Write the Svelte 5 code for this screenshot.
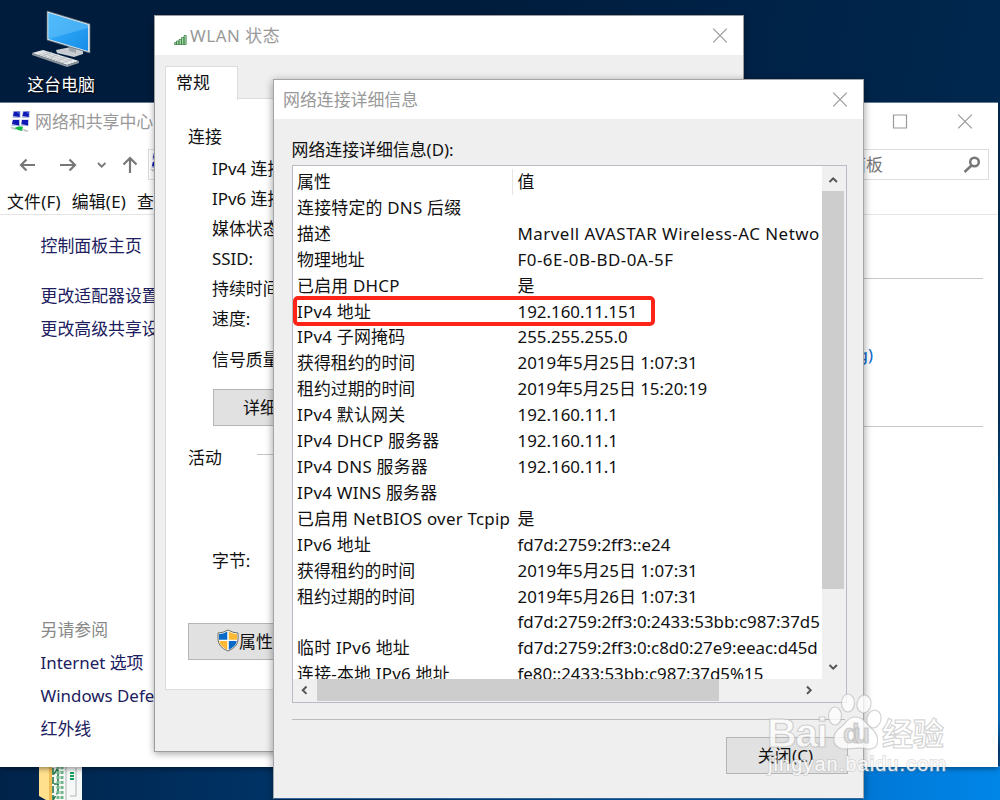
<script lang="ts">
    const rows = [
        ['属性', '值'],
        ['连接特定的 DNS 后缀', ''],
        ['描述', 'Marvell AVASTAR Wireless-AC Netwo'],
        ['物理地址', 'F0-6E-0B-BD-0A-5F'],
        ['已启用 DHCP', '是'],
        ['IPv4 地址', '192.160.11.151'],
        ['IPv4 子网掩码', '255.255.255.0'],
        ['获得租约的时间', '2019年5月25日 1:07:31'],
        ['租约过期的时间', '2019年5月25日 15:20:19'],
        ['IPv4 默认网关', '192.160.11.1'],
        ['IPv4 DHCP 服务器', '192.160.11.1'],
        ['IPv4 DNS 服务器', '192.160.11.1'],
        ['IPv4 WINS 服务器', ''],
        ['已启用 NetBIOS over Tcpip', '是'],
        ['IPv6 地址', 'fd7d:2759:2ff3::e24'],
        ['获得租约的时间', '2019年5月25日 1:07:31'],
        ['租约过期的时间', '2019年5月26日 1:07:31'],
        ['', 'fd7d:2759:2ff3:0:2433:53bb:c987:37d5'],
        ['临时 IPv6 地址', 'fd7d:2759:2ff3:0:c8d0:27e9:eeac:d45d'],
        ['连接-本地 IPv6 地址', 'fe80::2433:53bb:c987:37d5%15']
    ];
    const status = ['IPv4 连接:', 'IPv6 连接:', '媒体状态:', 'SSID:', '持续时间:', '速度:'];
    const tasks = ['更改适配器设置', '更改高级共享设'];
    const related = ['Internet 选项', 'Windows Defe', '红外线'];
</script>

{#snippet closeIcon()}
    <svg class="close" width="16" height="16" viewBox="0 0 16 16"><path d="M1.2 .7 14.8 14.3M14.8 .7 1.2 14.3" /></svg>
{/snippet}

{#snippet networkIcon()}
    <svg class="net-icon" width="22" height="22" viewBox="0 0 22 22">
        <path d="M0 15.500 6 17v2L2 18zM14 18l5 2-3 1-4-2z" fill="#c3c8cc" />
        <path d="M4.500 17q5-3 8.500-1l-1 4q-4 0-7.500-3z" fill="#19b845" />
        <path d="M3 0h7.500v7H2.500zM12.500 0H20l-.5 7h-7.500zM2.500 8.500H10v6.500H1.500zM11.500 8.500H19L18.500 15H11z" fill="#b4bfe0" />
        <path d="M4 .7h5.700V6L3 5zM13.500.7h5.300V6L12.500 5zM3 9h6v5.500L2 13zM12 9h6v5.500L11.500 13z" fill="#1017b4" />
        <path d="M6.500.7h3.200v3zM16 .7h2.800v3z" fill="#3c59dd" />
    </svg>
{/snippet}

<main class="desktop">
    <div class="computer">
        <svg width="60" height="58" viewBox="0 0 60 58">
            <defs>
                <linearGradient id="screen" x1="0" y1="0" x2="1" y2="1">
                    <stop offset="0" stop-color="#39b4fb" />
                    <stop offset="1" stop-color="#168de9" />
                </linearGradient>
            </defs>
            <path d="M24 40l15-3 12 4v3l-9 3-17-4z" fill="#c8cdd1" />
            <path d="M37 35h7v8l-7-2z" fill="#9ca5ac" />
            <path d="M15 1 58 14v29L15 30z" fill="#d9e2e8" stroke="#5c6974" stroke-width=".7" />
            <path d="M16.500 3 56 15v26L16.500 29z" fill="url(#screen)" />
            <path d="M16.500 3 56 15v3L16.500 29z" fill="#69c4fc" opacity=".5" />
            <path d="M0 43 11 40l36 11-12 4z" fill="#e3e6e7" />
            <path d="M0 43 35 55l12-4v2l-12 4L0 45z" fill="#8c959d" />
            <path d="M7 44l25 9M10 43l26 9M13 42l27 9M11 46l9-4M18 48l9-4M25 51l9-4M31 53l9-4" stroke="#b0b6ba" stroke-width=".7" />
        </svg>
        <span>这台电脑</span>
    </div>

    <svg class="folder" width="44" height="38" viewBox="0 0 44 38">
        <path d="M1 0h14v38L1 30z" fill="#ffe08d" />
        <path d="M11 0h3v38h-3z" fill="#f0bd55" />
        <path d="M14 0h30v38H14z" fill="#f6f8f7" />
        <path d="M15 2v32M16 8l4-6v24l-5 8M16 18h5" stroke="#267848" stroke-width="1.600" fill="none" stroke-dasharray="7 2" />
        <path d="M20 0v36M24 0v38" stroke="#70b68a" stroke-width="3" stroke-dasharray="3 2" />
        <path d="M28 0v38M38 2v28h-6" stroke="#b0b5b8" fill="none" />
        <path d="M34 6v8" stroke="#18a262" stroke-width="4" stroke-dasharray="2 1" />
    </svg>

    <section class="window network">
        <header>
            {@render networkIcon()}
            <h1>网络和共享中心</h1>
            <svg class="maximize" width="16" height="16" viewBox="0 0 16 16"><path d="M1.500 1h13v13h-13z" /></svg>
            {@render closeIcon()}
        </header>
        <nav>
            <svg class="arrows" width="144" height="24" viewBox="0 0 144 24">
                <path d="M35 12H21M26.500 6.500 21 12l5.500 5.500M60 12h14M69.500 6.500 75 12l-5.500 5.500M130 20V6M123.500 11.500 130 5l6.500 6.500" />
                <path class="small" d="m98 10 3.700 3.700L105.400 10" />
            </svg>
            <div class="address">{@render networkIcon()}</div>
            <div class="search">
                <span>面板</span>
                <svg width="18" height="18" viewBox="0 0 18 18"><circle cx="11.500" cy="6" r="4.300" /><path d="M8.500 9.500 1.500 16" /></svg>
            </div>
        </nav>
        <div class="menubar"><span>文件(F)</span><span>编辑(E)</span><span>查</span></div>
        <div class="body">
            <aside>
                <a class="home">控制面板主页</a>
                {#each tasks as task}
                    <a>{task}</a>
                {/each}
                <p>另请参阅</p>
                {#each related as item}
                    <a>{item}</a>
                {/each}
            </aside>
            <div class="content">
                <div class="connection"><a>g)</a></div>
            </div>
        </div>
    </section>

    <section class="window wlan">
        <header>
            <svg class="signal" width="13" height="10" viewBox="0 0 13 10">
                <path d="M.5 9.500v-2h2v2zM2.500 9.500V6h2.500v3.500zM5 9.500V4.500h2.500v5zM7.500 9.500v-7H10v7zM10 9.500v-9h2.200v9z" />
            </svg>
            <h1>WLAN 状态</h1>
            {@render closeIcon()}
        </header>
        <div class="tabs"><span>常规</span></div>
        <div class="pane">
            <h2>连接</h2>
            <div class="status">
                {#each status as label}
                    <span>{label}</span>
                {/each}
                <span class="quality">信号质量:</span>
            </div>
            <button class="details-button">详细</button>
            <div class="activity"><h2>活动</h2><i></i></div>
            <span class="bytes">字节:</span>
            <button class="properties">
                <svg width="22" height="23" viewBox="0 0 22 23">
                    <path d="M11 1Q6 4 1 4v6q0 8 10 12 10-4 10-12V4Q16 4 11 1z" fill="#fff" stroke="#6b6b62" />
                    <path d="M10.300 2.500v8.200H2V5q4 0 8.300-2.500zM11.800 12h8q-1 5.500-8 8.700z" fill="#0869c6" />
                    <path d="M11.800 2.500Q16 5 20 5v5.700h-8.200zM2.200 12h8.100v8.700Q3.200 17.500 2.200 12z" fill="#fdb934" />
                </svg>属性
            </button>
        </div>
    </section>

    <section class="window details">
        <header>
            <h1>网络连接详细信息</h1>
            {@render closeIcon()}
        </header>
        <p class="caption">网络连接详细信息(D):</p>
        <div class="listbox">
            <div class="list">
                {#each rows as [name, value], i}
                    <div class="row" class:heading={i === 0} class:adapter={i === 2 || i === 3}>
                        <span class="name" class:latin-name={/[A-Z]/.test(name)}>{name}</span>
                        <span class="value">{value}</span>
                    </div>
                {/each}
            </div>
            <div class="vscroll">
                <svg width="22" height="23" viewBox="0 0 22 23"><path d="m7.500 14 3.700-3.700 3.700 3.700" /></svg>
                <div class="thumb"></div>
                <svg width="22" height="23" viewBox="0 0 22 23"><path d="m7.500 9 3.700 3.700 3.700-3.700" /></svg>
            </div>
            <div class="hscroll">
                <svg width="23" height="22" viewBox="0 0 23 22"><path d="M13.500 7.500 9.800 11.200l3.700 3.700" /></svg>
                <div class="thumb"></div>
                <svg width="23" height="22" viewBox="0 0 23 22"><path d="m9 7.500 3.700 3.700L9 14.900" /></svg>
            </div>
        </div>
        <div class="highlight"></div>
        <footer><button>关闭(C)</button></footer>
    </section>

    <svg class="watermark" width="190" height="96" viewBox="0 0 190 96">
        <g class="mark">
            <ellipse cx="74" cy="31" rx="6.500" ry="9" />
            <ellipse cx="87" cy="18" rx="6.500" ry="9" />
            <ellipse cx="103" cy="19" rx="7" ry="9" transform="rotate(8 103 19)" />
            <ellipse cx="113" cy="34" rx="7" ry="9" transform="rotate(15 113 34)" />
            <path d="M94 32c-8 0-9 7-14 10-10 7-10 20 2 22 8 0 16-2 25 0 12 1 12-13 4-20-6-5-8-12-17-12z" />
            <text class="latin" x="6" y="62" textLength="61">Bai</text>
            <text class="latin du" x="82" y="58" textLength="27">du</text>
            <text class="cjk" x="121" y="60" textLength="62">经验</text>
            <text class="url" x="7" y="86" textLength="178">jingyan.baidu.com</text>
        </g>
    </svg>
</main>

<style>
    :global(body) {
        margin: 0;
        overflow: hidden;
    }

    .desktop {
        position: relative;
        width: 1000px;
        height: 800px;
        overflow: hidden;
        font: 16.9px/26px "Noto Sans", "Noto Sans CJK SC", sans-serif;
        color: #111;
        background:
            linear-gradient(90deg, #00234a 0, #003366 27%, #0067bd 65%, #0078d7 87%, #0086e8) 0 766px / 1000px 34px no-repeat,
            linear-gradient(#012b53 0, #003567 320px, #0068a8 420px, #0088d0 520px, #0078d0 620px, #034077 650px, #0078d7 720px) 996px 100px / 4px 700px no-repeat,
            linear-gradient(100deg, #001c3d 0, #001c3c 40%, #002348 70%, #002a52);
    }

    h1, h2, p {
        margin: 0;
        font-size: inherit;
        font-weight: 400;
    }

    svg {
        display: block;
        flex: none;
    }

    button {
        box-sizing: border-box;
        padding: 0;
        border: 1px solid #b5b5b5;
        background: #e1e1e1;
        color: inherit;
        font: inherit;
    }

    .computer {
        position: absolute;
        top: 10px;
        left: 22px;
        width: 78px;
        display: flex;
        flex-direction: column;
        align-items: center;
        gap: 4px;
        color: #fff;
        text-shadow: 1px 1px 2px #000;
    }

    .computer svg {
        margin-left: 1px;
    }

    .folder {
        position: absolute;
        top: 766px;
        left: 38px;
    }

    .window {
        position: absolute;
        box-sizing: border-box;
        background: #efefef;
    }

    .window header {
        display: flex;
        align-items: center;
        background: #fff;
    }

    h1 {
        flex: 1;
        color: #999;
        white-space: nowrap;
    }

    .close, .maximize {
        fill: none;
        stroke: #999;
        stroke-width: 1.2;
    }

    /* network and sharing center */
    .network {
        top: 102px;
        left: 0;
        width: 998px;
        height: 665px;
        border-top: 1px solid #617b96;
        background: #fff;
        box-shadow: 0 2px 5px #0006;
    }

    .network header {
        height: 38px;
        padding: 0 25px 0 10px;
    }

    .network h1 {
        margin-left: 3px;
    }

    .net-icon {
        margin-top: -1px;
    }

    .maximize {
        margin-right: 49px;
    }

    nav {
        display: flex;
        align-items: center;
        height: 47px;
        padding: 0 9px 2px 0;
    }

    .arrows {
        margin: 1px 4px 0 0;
        fill: none;
        stroke: #777;
        stroke-width: 2.2;
    }

    .arrows .small {
        stroke-width: 1.8;
    }

    .address, .search {
        box-sizing: border-box;
        height: 31px;
        border: 1px solid #ddd;
    }

    .address {
        width: 500px;
        padding: 4px 1px;
    }

    .search {
        display: flex;
        align-items: center;
        justify-content: space-between;
        width: 160px;
        margin-left: auto;
        padding: 0 7px 0 19px;
        color: #777;
    }

    .search svg {
        fill: none;
        stroke: #777;
        stroke-width: 2.5;
    }

    .menubar {
        display: flex;
        gap: 11px;
        height: 24px;
        padding-left: 7px;
        border-bottom: 1px solid #e5e5e5;
        line-height: 24px;
        letter-spacing: .2px;
    }

    .body {
        display: flex;
    }

    aside {
        display: flex;
        flex-direction: column;
        width: 240px;
        padding: 17px 0 0 40.5px;
        box-sizing: border-box;
        color: #202060;
    }

    aside a {
        height: 33px;
        line-height: 28px;
        white-space: nowrap;
    }

    aside .home {
        height: 50px;
    }

    aside p {
        margin-top: 268px;
        height: 33px;
        line-height: 28px;
        color: #888;
    }

    .content {
        flex: 1;
        padding: 63px 15px 0 0;
    }

    .connection {
        box-sizing: border-box;
        height: 149px;
        padding: 63px 110px 0 0;
        border-top: 1px solid #c8c8c8;
        border-bottom: 1px solid #c8c8c8;
        text-align: right;
        color: #0868cc;
    }

    /* wlan status */
    .wlan {
        top: 15px;
        left: 154px;
        width: 590px;
        height: 737px;
        border: 1px solid #9b9da1;
        box-shadow: 0 2px 7px #0005;
    }

    .wlan header {
        height: 39px;
        padding: 0 15px 0 19px;
    }

    .wlan h1 {
        letter-spacing: .55px;
    }

    .signal {
        margin: 9px 3px 0 0;
        fill: #a4dba8;
        stroke: #34763e;
        stroke-width: .7;
    }

    .tabs {
        display: flex;
        height: 32px;
        padding: 11px 0 0 10px;
    }

    .tabs span {
        position: relative;
        z-index: 1;
        width: 61px;
        height: 33px;
        padding-left: 10px;
        border: 1px solid #dcdcdc;
        border-bottom: 0;
        background: #fff;
        line-height: 32px;
    }

    .pane {
        box-sizing: border-box;
        width: 568px;
        height: 592px;
        margin-left: 10px;
        padding: 25px 0 0 22px;
        border: 1px solid #dcdcdc;
        background: #fff;
    }

    .status {
        display: flex;
        flex-direction: column;
        padding: 4px 0 0 24px;
    }

    .status span {
        height: 30px;
        line-height: 30px;
    }

    .status .quality {
        margin-top: 11px;
    }

    .details-button {
        display: block;
        width: 150px;
        height: 37px;
        margin: 14px 0 0 25px;
        padding-left: 29px;
        text-align: left;
    }

    .activity {
        display: flex;
        align-items: center;
        gap: 35px;
        margin-top: 19px;
    }

    .activity i {
        flex: 1;
        height: 1px;
        margin-top: -7px;
        background: #c5c5c5;
    }

    .bytes {
        display: block;
        margin: 77px 0 0 24px;
    }

    .properties {
        display: flex;
        align-items: center;
        width: 150px;
        height: 37px;
        margin-top: 49px;
        padding-left: 28px;
    }

    .properties svg {
        margin: -2px 0 0;
    }

    /* connection details */
    .details {
        top: 79px;
        left: 273px;
        width: 591px;
        height: 720px;
        border: 1px solid #a5a6aa;
        border-bottom-color: #336799;
        box-shadow: 0 2px 8px #0006;
    }

    .details header {
        height: 39px;
        padding: 0 15px 0 9px;
    }

    .caption {
        padding: 18px 0 2px 17.5px;
    }

    .listbox {
        box-sizing: border-box;
        display: grid;
        grid-template: 513px 22px / 529px 22px;
        width: 555px;
        height: 538px;
        margin-left: 18px;
        border: 1px solid #b8bac4;
        background: #f0f0f0;
    }

    .list {
        overflow: hidden;
        padding-top: 3px;
        box-sizing: border-box;
        background: #fff;
    }

    .row {
        display: flex;
        height: 25.92px;
        line-height: 26px;
        white-space: pre;
    }

    .name {
        box-sizing: border-box;
        width: 220px;
        padding-left: 4px;
    }

    .latin-name {
        letter-spacing: .24px;
    }

    .value {
        padding-left: 4.5px;
    }

    .adapter .value {
        letter-spacing: .5px;
    }

    .heading .value {
        box-shadow: -1px 0 #e5e5e5;
    }

    .vscroll svg, .hscroll svg {
        fill: none;
        stroke: #555;
        stroke-width: 2;
    }

    .vscroll {
        display: flex;
        flex-direction: column;
        justify-content: space-between;
        margin-top: 2px;
    }

    .vscroll .thumb {
        height: 398px;
        margin-bottom: auto;
        background: #cdcdcd;
    }

    .hscroll {
        display: flex;
    }

    .hscroll .thumb {
        width: 402px;
        margin: 0 79px 0 1px;
        background: #cdcdcd;
    }

    .highlight {
        position: absolute;
        top: 216px;
        left: 19px;
        width: 354px;
        height: 22px;
        border: 4px solid #ff2418;
        border-radius: 5px;
    }

    footer {
        display: flex;
        justify-content: flex-end;
        margin: 16px 18px 0;
        padding-top: 17px;
        border-top: 1px solid #bbb;
    }

    footer button {
        width: 122px;
        height: 37px;
        margin-right: -3px;
        padding-right: 3px;
        letter-spacing: .2px;
    }

    .watermark {
        position: absolute;
        top: 685px;
        left: 761px;
    }

    .mark {
        fill: #fff;
        fill-opacity: .75;
        stroke: #aaa;
        stroke-opacity: .5;
        stroke-width: 1.2;
    }

    .latin {
        font: 700 41px "Liberation Sans", sans-serif;
    }

    .du {
        font-size: 27px;
        fill: #d6d6d6;
    }

    .cjk {
        font: 700 31px "Noto Sans CJK SC", sans-serif;
    }

    .url {
        font: 20px "Liberation Sans", sans-serif;
        fill-opacity: .9;
        paint-order: stroke;
        stroke-width: 2;
        stroke-opacity: .35;
    }
</style>
